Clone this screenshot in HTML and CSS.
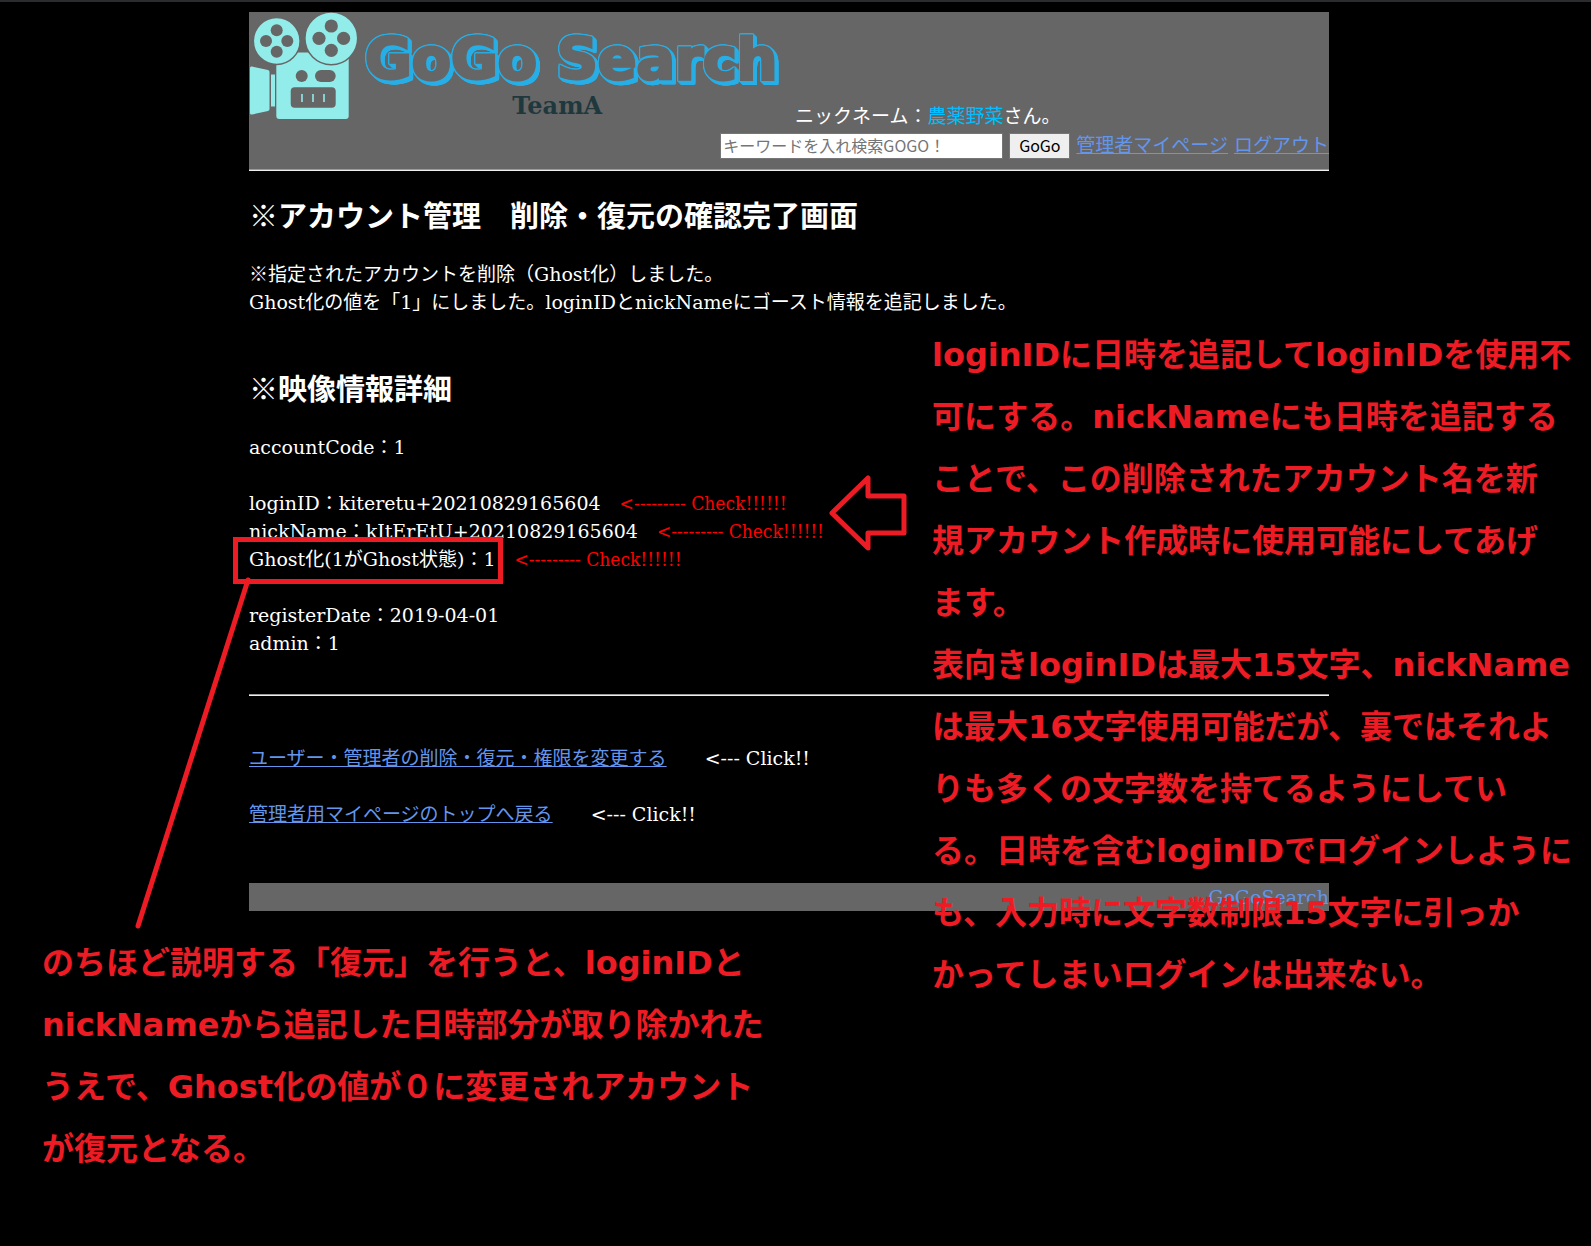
FILE: index.html
```html
<!DOCTYPE html>
<html lang="ja">
<head>
<meta charset="utf-8">
<title>GoGo Search</title>
<link rel="stylesheet" href="styles.css">
</head>
<body>
<div class="page">
  <header class="header">
    <div class="header-top">
      <div class="brand">
        <svg class="camera" viewBox="0 0 108 108" width="108" height="108" aria-hidden="true">
          <g fill="#92ecea">
            <path d="M1 56Q1 54 3 54.500L19 58Q20.500 58.500 20.500 60V97Q20.500 98.500 19 99L3 102.500Q1 103 1 101Z"/>
            <rect x="22" y="62.500" width="4" height="32"/>
            <rect x="27.300" y="40.500" width="72.400" height="66.500" rx="3"/>
          </g>
          <g fill="#92ecea" stroke="#666" stroke-width="1.500">
            <circle cx="27.700" cy="29" r="23.400"/>
            <circle cx="82.300" cy="26.300" r="26.400"/>
          </g>
          <g fill="#666">
            <circle cx="27.700" cy="18.300" r="6"/><circle cx="17" cy="29" r="6"/>
            <circle cx="38.300" cy="29" r="6"/><circle cx="27.700" cy="39.700" r="6"/>
            <circle cx="82.300" cy="14" r="6.600"/><circle cx="70" cy="26.300" r="6.600"/>
            <circle cx="94.600" cy="26.300" r="6.600"/><circle cx="82.300" cy="38.300" r="6.600"/>
            <circle cx="52.700" cy="64" r="6"/>
            <rect x="66" y="58" width="20.700" height="12" rx="6"/>
            <rect x="41.700" y="75.300" width="45" height="20.400" rx="4"/>
          </g>
          <path d="M53 82v8M64 82v8M75 82v8" stroke="#92ecea" stroke-width="1.600"/>
        </svg>
        <div class="brand-text">
          <span class="brand-name">GoGo Search</span>
          <span class="brand-team">TeamA</span>
        </div>
      </div>
      <p class="nickname">ニックネーム：<span class="nick">農薬野菜</span>さん。</p>
    </div>
    <form class="search">
      <input class="search-box" type="text" aria-label="キーワード" placeholder="キーワードを入れ検索GOGO！">
      <button class="search-button" type="button">GoGo</button>
      <a href="#">管理者マイページ</a>
      <a href="#">ログアウト</a>
    </form>
    <hr class="rule">
  </header>

  <main>
    <h1>※アカウント管理　削除・復元の確認完了画面</h1>
    <p>※指定されたアカウントを削除（Ghost化）しました。<br>Ghost化の値を「1」にしました。loginIDとnickNameにゴースト情報を追記しました。</p>

    <h2>※映像情報詳細</h2>
    <p>accountCode：1</p>
    <p>loginID：kiteretu+20210829165604　<span class="check">&lt;--------- Check!!!!!!</span><br>nickName：kItErEtU+20210829165604　<span class="check">&lt;--------- Check!!!!!!</span><br>Ghost化(1がGhost状態)：1　<span class="check">&lt;--------- Check!!!!!!</span></p>
    <p>registerDate：2019-04-01<br>admin：1</p>
    <hr class="rule">
    <nav class="actions">
      <p><a href="#">ユーザー・管理者の削除・復元・権限を変更する</a>　　&lt;--- Click!!</p>
      <p><a href="#">管理者用マイページのトップへ戻る</a>　　&lt;--- Click!!</p>
    </nav>
  </main>

  <footer class="footer"><a href="#">GoGoSearch</a></footer>

  <svg class="marks" viewBox="0 0 800 480" width="800" height="480" fill="none" stroke="#ed1c24" stroke-width="5" aria-hidden="true">
    <rect x="105.500" y="69.500" width="265" height="42"/>
    <path d="M118 110L8 456" stroke-linecap="round"/>
    <path d="M702 43L738 8V26H774V63H738V78Z" stroke-linejoin="round"/>
  </svg>
  <p class="note note-right">loginIDに日時を追記してloginIDを使用不<br>可にする。nickNameにも日時を追記する<br>ことで、この削除されたアカウント名を新<br>規アカウント作成時に使用可能にしてあげ<br>ます。<br>表向きloginIDは最大15文字、nickName<br>は最大16文字使用可能だが、裏ではそれよ<br>りも多くの文字数を持てるようにしてい<br>る。日時を含むloginIDでログインしように<br>も、入力時に文字数制限15文字に引っか<br>かってしまいログインは出来ない。</p>
  <p class="note note-left">のちほど説明する「復元」を行うと、loginIDと<br>nickNameから追記した日時部分が取り除かれた<br>うえで、Ghost化の値が０に変更されアカウント<br>が復元となる。</p>
</div>
</body>
</html>
```
FILE: styles.css
```css
* { box-sizing: border-box; }

body {
  margin: 0;
  padding: 10px 13px 0 0;
  min-height: 100vh;
  border-top: 2px solid #2b2c30;
  background: #000;
  color: #fff;
  font: 19px/28px "DejaVu Serif", "Noto Sans CJK JP", serif;
  overflow-x: hidden;
}

a { color: #6495ed; }
p { margin: 0 0 28px; }

.page {
  position: relative;
  max-width: 1080px;
  margin: 0 auto;
}

.header { background: #666; }
.header-top {
  display: flex;
  align-items: flex-end;
}
.brand {
  display: flex;
  gap: 8px;
  width: 546px;
  height: 118px;
}
.camera { flex: none; }
.brand-text {
  display: flex;
  flex-direction: column;
  align-items: center;
  padding-top: 18px;
}
.brand-name {
  color: #666;
  font: bold 57px/58px "DejaVu Sans", sans-serif;
  white-space: nowrap;
  -webkit-text-stroke: 3px #666;
  filter:
    drop-shadow(1px 0 #27aee6) drop-shadow(-1px 0 #27aee6)
    drop-shadow(0 1px #27aee6) drop-shadow(0 -1px #27aee6)
    drop-shadow(1px 1px #27aee6) drop-shadow(2px 2px #27aee6);
}
.brand-team {
  color: #1f383d;
  font: bold 24px/36px "DejaVu Serif", serif;
  padding-right: 28px;
}
.nickname { margin: 0; white-space: nowrap; }
.nick { color: #00bfff; }

.search {
  display: flex;
  justify-content: flex-end;
  gap: 6px;
  padding: 3px 0 10px;
}
.search a { line-height: 24px; white-space: nowrap; }
.search-box,
.search-button {
  height: 26px;
  border: 1px solid #767676;
  font: 16px/20px "Noto Sans CJK JP", sans-serif;
}
.search-box { width: 283px; padding: 0 2px 3px; background: #fff; }
.search-box::placeholder { color: #757575; }
.search-button { width: 61px; padding: 0 0 3px; background: #efefef; color: #000; }

.rule {
  margin: 0;
  border: 0;
  border-top: 1px solid #9a9a9a;
  border-bottom: 1px solid #eee;
}

h1, h2 {
  margin: 25px 0 22px;
  font-size: 29px;
  line-height: 42px;
}
h2 { margin-top: 53px; }
.check { color: #f00; font-family: "DejaVu Serif Condensed", serif; }
main .rule { margin: 37px 0 48px; }
.actions { margin-bottom: 55px; }
.actions p:last-child { margin: 0; }

.footer { background: #666; text-align: right; }
.footer a { text-decoration: none; }

/* Red hand-placed annotations over the page */
.marks {
  position: absolute;
  left: -119px;
  top: 458px;
  pointer-events: none;
}
.note {
  position: absolute;
  margin: 0;
  color: #ed1c24;
  font: bold 32px/62px "DejaVu Sans", "Noto Sans CJK JP", sans-serif;
  white-space: nowrap;
}
.note-right { left: 683px; top: 312px; }
.note-left { left: -207px; top: 920px; }
```
